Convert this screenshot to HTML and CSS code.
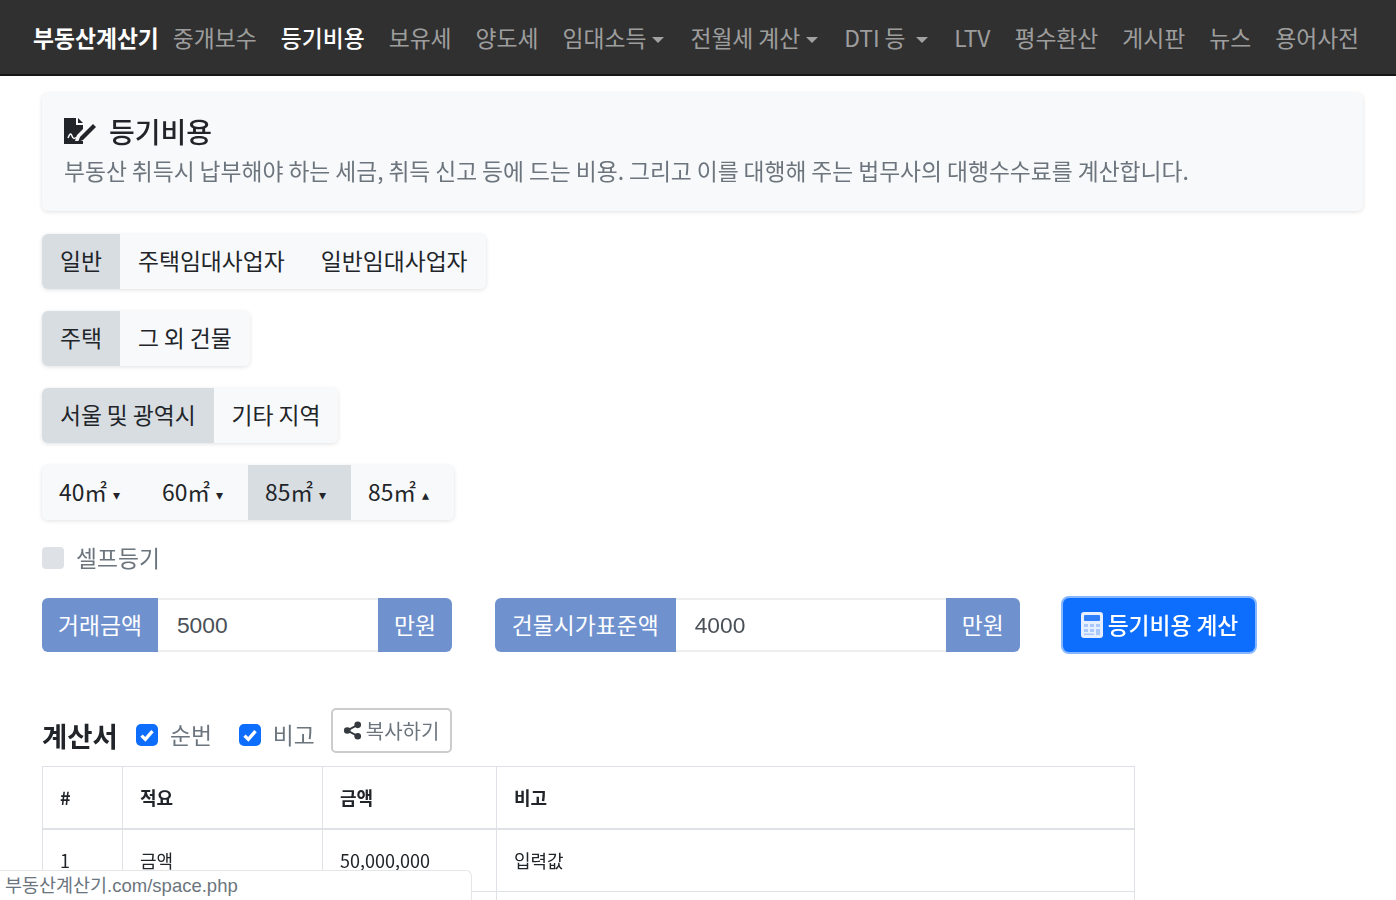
FILE: index.html
```html
<!DOCTYPE html>
<html lang="ko">
<head>
<meta charset="utf-8">
<title>등기비용 - 부동산계산기</title>
<link rel="stylesheet" href="styles.css">
</head>
<body>
<nav class="navbar">
  <a class="brand">부동산계산기</a>
  <a class="nav-link">중개보수</a>
  <a class="nav-link active">등기비용</a>
  <a class="nav-link">보유세</a>
  <a class="nav-link">양도세</a>
  <a class="nav-link caret">임대소득</a>
  <a class="nav-link caret">전월세 계산</a>
  <a class="nav-link caret">DTI 등&nbsp;</a>
  <a class="nav-link">LTV</a>
  <a class="nav-link">평수환산</a>
  <a class="nav-link">게시판</a>
  <a class="nav-link">뉴스</a>
  <a class="nav-link">용어사전</a>
</nav>
<main class="container">
  <header class="jumbotron">
    <h1 class="page-title">
      <svg class="title-icon" viewBox="0 0 34 28" aria-hidden="true"><path fill="#212529" d="M1 1h12v7h7v4l-6 6-2 6h8v3H1z"/><path fill="#212529" d="M15 1l5 5h-5z"/><path fill="#212529" d="M30 7l3 3-13 13-5 2 2-5z"/><path fill="none" stroke="#f8f9fa" stroke-width="1.5" d="M5 21c2-5 3-5 4-2s2 3 5 1"/></svg>
      등기비용
    </h1>
    <p class="lead">부동산 취득시 납부해야 하는 세금, 취득 신고 등에 드는 비용. 그리고 이를 대행해 주는 법무사의 대행수수료를 계산합니다.</p>
  </header>

  <div class="btn-group"><button class="btn on">일반</button><button class="btn">주택임대사업자</button><button class="btn">일반임대사업자</button></div>
  <div class="btn-group"><button class="btn on">주택</button><button class="btn">그 외 건물</button></div>
  <div class="btn-group"><button class="btn on">서울 및 광역시</button><button class="btn">기타 지역</button></div>
  <div class="btn-group size"><button class="btn">40㎡<span class="tri">▾</span></button><button class="btn">60㎡<span class="tri">▾</span></button><button class="btn on">85㎡<span class="tri">▾</span></button><button class="btn">85㎡<span class="tri">▴</span></button></div>

  <label class="self-check"><span class="box"></span>셀프등기</label>

  <form class="calc-row">
    <div class="input-group first"><span class="addon">거래금액</span><input class="field" value="5000"><span class="addon">만원</span></div>
    <div class="input-group second"><span class="addon wide">건물시가표준액</span><input class="field" value="4000"><span class="addon">만원</span></div>
    <button type="button" class="btn-calc">
      <svg class="calc-icon" viewBox="0 0 22 26" aria-hidden="true"><rect width="22" height="26" rx="3" fill="#e6efff"/><rect x="3" y="3" width="16" height="6" rx="1" fill="#2f7ffb"/><path fill="#a9c8fb" d="M3 12h4v3H3zm6 0h4v3H9zm6 0h4v3h-4zM3 17h4v3H3zm6 0h4v3H9zm6 0h4v6h-4zM3 21.500h10V23H3z"/></svg>등기비용 계산
    </button>
  </form>

  <div class="result-head">
    <h2 class="result-title">계산서</h2>
    <label class="opt"><span class="check"><svg viewBox="0 0 20 20" aria-hidden="true"><path fill="none" stroke="#fff" stroke-width="3" d="M5 10.500l3.500 3.500 6.500-7.500"/></svg></span>순번</label>
    <label class="opt"><span class="check"><svg viewBox="0 0 20 20" aria-hidden="true"><path fill="none" stroke="#fff" stroke-width="3" d="M5 10.500l3.500 3.500 6.500-7.500"/></svg></span>비고</label>
    <button class="btn-copy">
      <svg class="share-icon" viewBox="0 0 20 20" aria-hidden="true"><g fill="#343a40"><circle cx="15.500" cy="4" r="3.500"/><circle cx="4.500" cy="10" r="3.500"/><circle cx="15.500" cy="16" r="3.500"/></g><path stroke="#343a40" stroke-width="2" fill="none" d="M15.500 4L4.500 10l11 6"/></svg>복사하기
    </button>
  </div>

  <table class="sheet">
    <colgroup><col class="c1"><col class="c2"><col class="c3"><col class="c4"></colgroup>
    <thead><tr><th>#</th><th>적요</th><th>금액</th><th>비고</th></tr></thead>
    <tbody>
      <tr><td>1</td><td>금액</td><td>50,000,000</td><td>입력값</td></tr>
      <tr><td></td><td></td><td></td><td></td></tr>
    </tbody>
  </table>
</main>
<div class="status-tip">부동산계산기.com/space.php</div>
</body>
</html>
```

FILE: styles.css
```css
* { box-sizing: border-box; }
html, body { height: 900px; overflow: hidden; }
body {
  margin: 0;
  background: #fff;
  color: #212529;
  font-family: "Noto Sans CJK KR", "Liberation Sans", sans-serif;
  font-size: 22.8px;
  line-height: 1.5;
  word-spacing: -1.5px;
  filter: blur(.45px);
}
.navbar {
  display: flex;
  align-items: center;
  height: 76px;
  padding: 2px 22px 0 33px;
  background: #303030;
  border-bottom: 2px solid #151515;
}
.brand {
  color: #fff;
  font-weight: 700;
  margin-right: 2px;
  white-space: nowrap;
}
.nav-link {
  color: rgba(255,255,255,.55);
  padding: 0 12px;
  white-space: nowrap;
}
.nav-link.active { color: #fff; font-weight: 500; }
.caret::after {
  content: "";
  display: inline-block;
  margin: 0 2px 0 6px;
  vertical-align: 4px;
  border-top: 6px solid currentColor;
  border-left: 6px solid transparent;
  border-right: 6px solid transparent;
}
.container { padding: 17px 33px 0 42px; }
.jumbotron {
  height: 118px;
  padding: 18px 24px 0 22px;
  background: #f8f9fa;
  border-radius: 6px;
  box-shadow: 0 1px 4px rgba(0,0,0,.12);
  margin-bottom: 23px;
}
.page-title {
  display: flex;
  align-items: center;
  gap: 12px;
  margin: 0 0 0 -1px;
  font-size: 28px;
  font-weight: 500;
  line-height: 40px;
}
.title-icon { width: 34px; height: 28px; }
.lead {
  margin: 3px 0 0;
  color: #6c757d;
  line-height: 34px;
  white-space: nowrap;
}
.btn-group {
  display: flex;
  width: max-content;
  height: 55px;
  margin-bottom: 22px;
  background: #f8f9fa;
  border-radius: 6px;
  box-shadow: 0 1px 4px rgba(0,0,0,.12);
  overflow: hidden;
}
.btn {
  border: 0;
  padding: 0 18px;
  background: #f8f9fa;
  color: #212529;
  font: inherit;
  word-spacing: inherit;
  white-space: nowrap;
}
.btn.on { background: #d8dde2; }
.tri { margin-left: 6px; font-size: 14px; vertical-align: 1px; }
.size { margin-bottom: 27px; }
.size .btn { width: 103px; padding: 0 0 0 17px; text-align: left; }
.self-check {
  display: flex;
  align-items: center;
  gap: 12px;
  height: 22px;
  color: #6c757d;
  margin-bottom: 27px;
}
.box {
  width: 22px;
  height: 22px;
  border-radius: 4px;
  background: #dee2e6;
}
.calc-row {
  display: flex;
  align-items: center;
  height: 58px;
}
.input-group {
  display: flex;
  height: 54px;
  margin-right: 43px;
  border-radius: 6px;
  overflow: hidden;
}
.first .field { width: 220px; }
.second .field { width: 270px; }
.addon {
  display: flex;
  align-items: center;
  padding: 0 16px;
  background: #6f92cf;
  color: #fff;
  white-space: nowrap;
}
.addon.wide { padding: 0 17px; }
.field {
  border: 0;
  border-top: 2px solid #eceef0;
  border-bottom: 2px solid #eceef0;
  padding: 0 19px;
  color: #495057;
  font: inherit;
  font-family: "Liberation Sans", sans-serif;
  outline: 0;
}
.btn-calc {
  display: flex;
  align-items: center;
  gap: 5px;
  width: 192px;
  height: 54px;
  padding: 0 0 0 18px;
  border: 0;
  border-radius: 6px;
  background: #0d6efd;
  box-shadow: 0 0 0 2px rgba(13,110,253,.5);
  color: #fff;
  font: inherit;
  font-weight: 500;
  word-spacing: inherit;
  white-space: nowrap;
}
.calc-icon { width: 22px; height: 26px; }
.result-head {
  display: flex;
  align-items: center;
  height: 58px;
  margin-top: 52px;
  margin-bottom: 2px;
}
.result-title {
  margin: 0 18px 0 0;
  font-size: 27.500px;
  font-weight: 700;
  line-height: 1.2;
}
.opt {
  display: flex;
  align-items: center;
  gap: 12px;
  margin-right: 27px;
  color: #6c757d;
}
.opt:last-of-type { margin-right: 16px; }
.check {
  display: flex;
  width: 22px;
  height: 22px;
  border-radius: 5px;
  background: #0d6efd;
}
.btn-copy {
  display: flex;
  align-items: center;
  gap: 4px;
  height: 45px;
  margin-top: -9px;
  padding: 0 11px 0 10px;
  background: #fff;
  border: 2px solid #ccc;
  border-radius: 5px;
  color: #6c757d;
  font: inherit;
  font-size: 20px;
}
.share-icon { width: 19px; height: 19px; }
.sheet {
  table-layout: fixed;
  width: 1093px;
  border-collapse: collapse;
  font-size: 18px;
}
.c1 { width: 80px; }
.c2 { width: 200px; }
.c3 { width: 174px; }
.sheet th, .sheet td {
  padding: 0 17px;
  border: 1px solid #dee2e6;
  text-align: left;
  vertical-align: middle;
}
.sheet th { height: 62px; font-weight: 700; border-bottom-width: 2px; }
.sheet td { height: 63px; }
.status-tip {
  position: fixed;
  left: 0;
  bottom: 0;
  width: 472px;
  height: 30px;
  padding-left: 5px;
  background: #fff;
  border: 1px solid #e6e6e6;
  border-left: 0;
  border-bottom: 0;
  border-top-right-radius: 6px;
  color: #6c757d;
  font-family: "Liberation Sans", "Noto Sans CJK KR", sans-serif;
  font-size: 18.500px;
  line-height: 30px;
}
```
